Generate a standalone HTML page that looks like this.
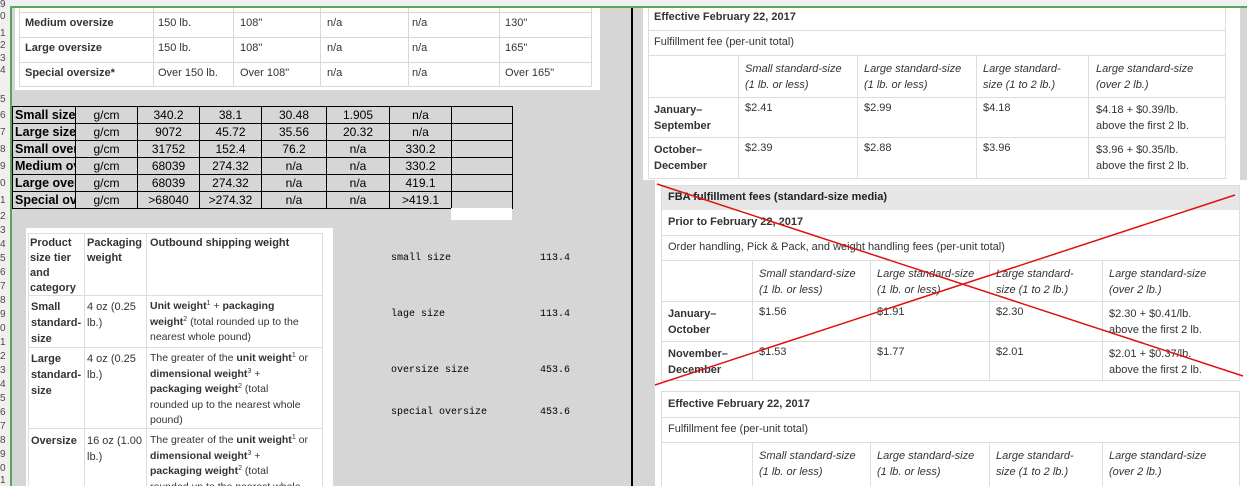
<!DOCTYPE html>
<html><head><meta charset="utf-8"><style>
*{margin:0;padding:0;box-sizing:border-box}
html,body{width:1247px;height:486px;overflow:hidden}
body{background:#d6d6d6;position:relative;font-family:"Liberation Sans",sans-serif;color:#333}
.a{position:absolute}
.t{position:absolute;white-space:nowrap}
.rn{position:absolute;left:0;width:10px;font-size:10px;color:#4a4a4a;text-align:left;line-height:10px}
.hl{position:absolute;background:#d8d8d8;height:1px}
.vl{position:absolute;background:#d8d8d8;width:1px}
.bk td{border:1px solid #000;font-size:12px;text-align:center;height:17px;padding:0;line-height:15px;color:#000}
.bk td.l{font-weight:bold;text-align:left;font-size:12.5px;overflow:hidden;white-space:nowrap;padding-left:2px}
.p{font-size:11px;color:#333}
.b{font-weight:bold}
.i{font-style:italic}
.m{font-family:"Liberation Mono",monospace;font-size:10px;color:#000}
.q{font-size:10.5px;line-height:15.5px;white-space:nowrap}
sup{font-size:7px;vertical-align:baseline;position:relative;top:-4px;line-height:0}
</style></head><body>
<div class="a" style="left:0;top:0;width:1247px;height:6px;background:#f0f0f0"></div>
<div class="a" style="left:0;top:6px;width:1247px;height:2px;background:#5aa55a"></div>
<div class="a" style="left:0;top:0;width:11px;height:486px;background:#f0f0f0"></div>
<div class="a" style="left:10px;top:6px;width:2px;height:480px;background:#5aa55a"></div>
<div class="rn" style="top:0">9</div><div class="rn" style="top:12px">0</div><div class="rn" style="top:29px">1</div><div class="rn" style="top:41px">2</div><div class="rn" style="top:54px">3</div><div class="rn" style="top:66px">4</div><div class="rn" style="top:95px">5</div><div class="rn" style="top:111px">6</div><div class="rn" style="top:128px">7</div><div class="rn" style="top:145px">8</div><div class="rn" style="top:162px">9</div><div class="rn" style="top:179px">0</div><div class="rn" style="top:196px">1</div><div class="rn" style="top:212px">2</div><div class="rn" style="top:226px">3</div><div class="rn" style="top:240px">4</div><div class="rn" style="top:254px">5</div><div class="rn" style="top:268px">6</div><div class="rn" style="top:282px">7</div><div class="rn" style="top:296px">8</div><div class="rn" style="top:310px">9</div><div class="rn" style="top:324px">0</div><div class="rn" style="top:338px">1</div><div class="rn" style="top:352px">2</div><div class="rn" style="top:366px">3</div><div class="rn" style="top:380px">4</div><div class="rn" style="top:394px">5</div><div class="rn" style="top:408px">6</div><div class="rn" style="top:422px">7</div><div class="rn" style="top:436px">8</div><div class="rn" style="top:450px">9</div><div class="rn" style="top:464px">0</div><div class="rn" style="top:476px">1</div>

<div class="a" style="left:15px;top:8px;width:585px;height:82px;background:#fff"></div>
<div class="a" style="left:19px;top:8px;width:573px;height:79px;border:1px solid #d8d8d8;border-top:none"></div>
<div class="hl" style="left:19px;top:12px;width:573px"></div>
<div class="hl" style="left:19px;top:37px;width:573px"></div>
<div class="hl" style="left:19px;top:62px;width:573px"></div>
<div class="vl" style="left:153px;top:8px;height:79px"></div>
<div class="vl" style="left:233px;top:8px;height:79px"></div>
<div class="vl" style="left:320px;top:8px;height:79px"></div>
<div class="vl" style="left:408px;top:8px;height:79px"></div>
<div class="vl" style="left:499px;top:8px;height:79px"></div>
<div class="t p b" style="left:25px;top:17px">Medium oversize</div>
<div class="t p b" style="left:25px;top:42px">Large oversize</div>
<div class="t p b" style="left:25px;top:67px">Special oversize*</div>
<div class="t p" style="left:158px;top:17px">150 lb.</div><div class="t p" style="left:240px;top:17px">108"</div><div class="t p" style="left:327px;top:17px">n/a</div><div class="t p" style="left:412px;top:17px">n/a</div><div class="t p" style="left:505px;top:17px">130"</div>
<div class="t p" style="left:158px;top:42px">150 lb.</div><div class="t p" style="left:240px;top:42px">108"</div><div class="t p" style="left:327px;top:42px">n/a</div><div class="t p" style="left:412px;top:42px">n/a</div><div class="t p" style="left:505px;top:42px">165"</div>
<div class="t p" style="left:158px;top:67px">Over 150 lb.</div><div class="t p" style="left:240px;top:67px">Over 108"</div><div class="t p" style="left:327px;top:67px">n/a</div><div class="t p" style="left:412px;top:67px">n/a</div><div class="t p" style="left:505px;top:67px">Over 165"</div>

<table class="a bk" style="left:12px;top:106px;border-collapse:collapse;table-layout:fixed;width:500px">
<colgroup><col style="width:63px"><col style="width:62px"><col style="width:62px"><col style="width:62px"><col style="width:65px"><col style="width:63px"><col style="width:62px"><col style="width:61px"></colgroup>
<tr><td class="l">Small size</td><td>g/cm</td><td>340.2</td><td>38.1</td><td>30.48</td><td>1.905</td><td>n/a</td><td></td></tr>
<tr><td class="l">Large size</td><td>g/cm</td><td>9072</td><td>45.72</td><td>35.56</td><td>20.32</td><td>n/a</td><td></td></tr>
<tr><td class="l">Small oversize</td><td>g/cm</td><td>31752</td><td>152.4</td><td>76.2</td><td>n/a</td><td>330.2</td><td></td></tr>
<tr><td class="l">Medium oversize</td><td>g/cm</td><td>68039</td><td>274.32</td><td>n/a</td><td>n/a</td><td>330.2</td><td></td></tr>
<tr><td class="l">Large oversize</td><td>g/cm</td><td>68039</td><td>274.32</td><td>n/a</td><td>n/a</td><td>419.1</td><td></td></tr>
<tr><td class="l">Special oversize</td><td>g/cm</td><td>&gt;68040</td><td>&gt;274.32</td><td>n/a</td><td>n/a</td><td>&gt;419.1</td><td></td></tr>
</table>
<div class="a" style="left:451px;top:208px;width:61px;height:12px;background:#fff"></div>

<div class="a" style="left:26px;top:228px;width:307px;height:258px;background:#fff"></div>
<div class="a" style="left:28px;top:233px;width:295px;height:253px;border:1px solid #ddd;border-bottom:none"></div>
<div class="hl" style="left:28px;top:295px;width:295px;background:#ddd"></div>
<div class="hl" style="left:28px;top:347px;width:295px;background:#ddd"></div>
<div class="hl" style="left:28px;top:428px;width:295px;background:#ddd"></div>
<div class="vl" style="left:84px;top:233px;height:253px;background:#ddd"></div>
<div class="vl" style="left:146px;top:233px;height:253px;background:#ddd"></div>
<div class="a p b" style="left:30px;top:236px;width:54px;line-height:15px">Product size tier and category</div>
<div class="a p b" style="left:87px;top:236px;line-height:15px">Packaging<br>weight</div>
<div class="a p b" style="left:150px;top:236px;line-height:15px">Outbound shipping weight</div>
<div class="a p b" style="left:31px;top:299px;line-height:16px">Small<br>standard-<br>size</div>
<div class="a p" style="left:87px;top:299px;line-height:16px">4 oz (0.25<br>lb.)</div>
<div class="a p q" style="left:150px;top:299px"><b>Unit weight</b><sup>1</sup> + <b>packaging</b><br><b>weight</b><sup>2</sup> (total rounded up to the<br>nearest whole pound)</div>
<div class="a p b" style="left:31px;top:351px;line-height:16px">Large<br>standard-<br>size</div>
<div class="a p" style="left:87px;top:351px;line-height:16px">4 oz (0.25<br>lb.)</div>
<div class="a p q" style="left:150px;top:351px">The greater of the <b>unit weight</b><sup>1</sup> or<br><b>dimensional weight</b><sup>3</sup> +<br><b>packaging weight</b><sup>2</sup> (total<br>rounded up to the nearest whole<br>pound)</div>
<div class="a p b" style="left:31px;top:433px;line-height:16px">Oversize</div>
<div class="a p" style="left:87px;top:433px;line-height:16px">16 oz (1.00<br>lb.)</div>
<div class="a p q" style="left:150px;top:433px">The greater of the <b>unit weight</b><sup>1</sup> or<br><b>dimensional weight</b><sup>3</sup> +<br><b>packaging weight</b><sup>2</sup> (total<br>rounded up to the nearest whole</div>

<div class="t m" style="left:391px;top:253px">small size</div><div class="t m" style="left:540px;top:253px">113.4</div>
<div class="t m" style="left:391px;top:309px">lage size</div><div class="t m" style="left:540px;top:309px">113.4</div>
<div class="t m" style="left:391px;top:365px">oversize size</div><div class="t m" style="left:540px;top:365px">453.6</div>
<div class="t m" style="left:391px;top:407px">special oversize</div><div class="t m" style="left:540px;top:407px">453.6</div>

<div class="a" style="left:631px;top:8px;width:2px;height:478px;background:#000"></div>

<div class="a" style="left:643px;top:8px;width:597px;height:172px;background:#fff"></div>
<div class="a" style="left:648px;top:8px;width:578px;height:171px;border:1px solid #ddd;border-top:none"></div>
<div class="hl" style="left:648px;top:30px;width:578px;background:#ddd"></div>
<div class="hl" style="left:648px;top:55px;width:578px;background:#ddd"></div>
<div class="hl" style="left:648px;top:97px;width:578px;background:#ddd"></div>
<div class="hl" style="left:648px;top:137px;width:578px;background:#ddd"></div>
<div class="vl" style="left:738px;top:55px;height:124px;background:#ddd"></div>
<div class="vl" style="left:857px;top:55px;height:124px;background:#ddd"></div>
<div class="vl" style="left:976px;top:55px;height:124px;background:#ddd"></div>
<div class="vl" style="left:1088px;top:55px;height:124px;background:#ddd"></div>
<div class="t p b" style="left:654px;top:11px">Effective February 22, 2017</div>
<div class="t p" style="left:654px;top:36px">Fulfillment fee (per-unit total)</div>
<div class="a p i" style="left:745px;top:61px;line-height:16px">Small standard-size<br>(1 lb. or less)</div>
<div class="a p i" style="left:864px;top:61px;line-height:16px">Large standard-size<br>(1 lb. or less)</div>
<div class="a p i" style="left:983px;top:61px;line-height:16px">Large standard-<br>size (1 to 2 lb.)</div>
<div class="a p i" style="left:1096px;top:61px;line-height:16px">Large standard-size<br>(over 2 lb.)</div>
<div class="a p b" style="left:654px;top:102px;line-height:16px">January–<br>September</div>
<div class="t p" style="left:745px;top:102px">$2.41</div><div class="t p" style="left:864px;top:102px">$2.99</div><div class="t p" style="left:983px;top:102px">$4.18</div>
<div class="a p" style="left:1096px;top:102px;line-height:16px">$4.18 + $0.39/lb.<br>above the first 2 lb.</div>
<div class="a p b" style="left:654px;top:142px;line-height:16px">October–<br>December</div>
<div class="t p" style="left:745px;top:142px">$2.39</div><div class="t p" style="left:864px;top:142px">$2.88</div><div class="t p" style="left:983px;top:142px">$3.96</div>
<div class="a p" style="left:1096px;top:142px;line-height:16px">$3.96 + $0.35/lb.<br>above the first 2 lb.</div>

<div class="a" style="left:655px;top:180px;width:592px;height:306px;background:#fff"></div>
<div class="a" style="left:661px;top:185px;width:579px;height:25px;background:#e6e6e6"></div>
<div class="a" style="left:661px;top:185px;width:579px;height:196px;border:1px solid #ddd"></div>
<div class="hl" style="left:661px;top:235px;width:579px;background:#ddd"></div>
<div class="hl" style="left:661px;top:260px;width:579px;background:#ddd"></div>
<div class="hl" style="left:661px;top:301px;width:579px;background:#ddd"></div>
<div class="hl" style="left:661px;top:341px;width:579px;background:#ddd"></div>
<div class="vl" style="left:752px;top:260px;height:121px;background:#ddd"></div>
<div class="vl" style="left:870px;top:260px;height:121px;background:#ddd"></div>
<div class="vl" style="left:989px;top:260px;height:121px;background:#ddd"></div>
<div class="vl" style="left:1102px;top:260px;height:121px;background:#ddd"></div>
<div class="t p b" style="left:668px;top:191px;color:#222">FBA fulfillment fees (standard-size media)</div>
<div class="t p b" style="left:668px;top:216px">Prior to February 22, 2017</div>
<div class="t p" style="left:668px;top:241px">Order handling, Pick &amp; Pack, and weight handling fees (per-unit total)</div>
<div class="a p i" style="left:759px;top:266px;line-height:16px">Small standard-size<br>(1 lb. or less)</div>
<div class="a p i" style="left:877px;top:266px;line-height:16px">Large standard-size<br>(1 lb. or less)</div>
<div class="a p i" style="left:996px;top:266px;line-height:16px">Large standard-<br>size (1 to 2 lb.)</div>
<div class="a p i" style="left:1109px;top:266px;line-height:16px">Large standard-size<br>(over 2 lb.)</div>
<div class="a p b" style="left:668px;top:306px;line-height:16px">January–<br>October</div>
<div class="t p" style="left:759px;top:306px">$1.56</div><div class="t p" style="left:877px;top:306px">$1.91</div><div class="t p" style="left:996px;top:306px">$2.30</div>
<div class="a p" style="left:1109px;top:306px;line-height:16px">$2.30 + $0.41/lb.<br>above the first 2 lb.</div>
<div class="a p b" style="left:668px;top:346px;line-height:16px">November–<br>December</div>
<div class="t p" style="left:759px;top:346px">$1.53</div><div class="t p" style="left:877px;top:346px">$1.77</div><div class="t p" style="left:996px;top:346px">$2.01</div>
<div class="a p" style="left:1109px;top:346px;line-height:16px">$2.01 + $0.37/lb.<br>above the first 2 lb.</div>

<div class="a" style="left:661px;top:391px;width:579px;height:95px;border:1px solid #ddd;border-bottom:none"></div>
<div class="hl" style="left:661px;top:417px;width:579px;background:#ddd"></div>
<div class="hl" style="left:661px;top:442px;width:579px;background:#ddd"></div>
<div class="vl" style="left:752px;top:442px;height:44px;background:#ddd"></div>
<div class="vl" style="left:870px;top:442px;height:44px;background:#ddd"></div>
<div class="vl" style="left:989px;top:442px;height:44px;background:#ddd"></div>
<div class="vl" style="left:1102px;top:442px;height:44px;background:#ddd"></div>
<div class="t p b" style="left:668px;top:398px">Effective February 22, 2017</div>
<div class="t p" style="left:668px;top:423px">Fulfillment fee (per-unit total)</div>
<div class="a p i" style="left:759px;top:448px;line-height:16px">Small standard-size<br>(1 lb. or less)</div>
<div class="a p i" style="left:877px;top:448px;line-height:16px">Large standard-size<br>(1 lb. or less)</div>
<div class="a p i" style="left:996px;top:448px;line-height:16px">Large standard-<br>size (1 to 2 lb.)</div>
<div class="a p i" style="left:1109px;top:448px;line-height:16px">Large standard-size<br>(over 2 lb.)</div>

<svg class="a" style="left:0;top:0" width="1247" height="486"><line x1="657" y1="184" x2="1243" y2="376" stroke="#e01010" stroke-width="1.5"/><line x1="655" y1="385" x2="1235" y2="195" stroke="#e01010" stroke-width="1.5"/></svg>
</body></html>
